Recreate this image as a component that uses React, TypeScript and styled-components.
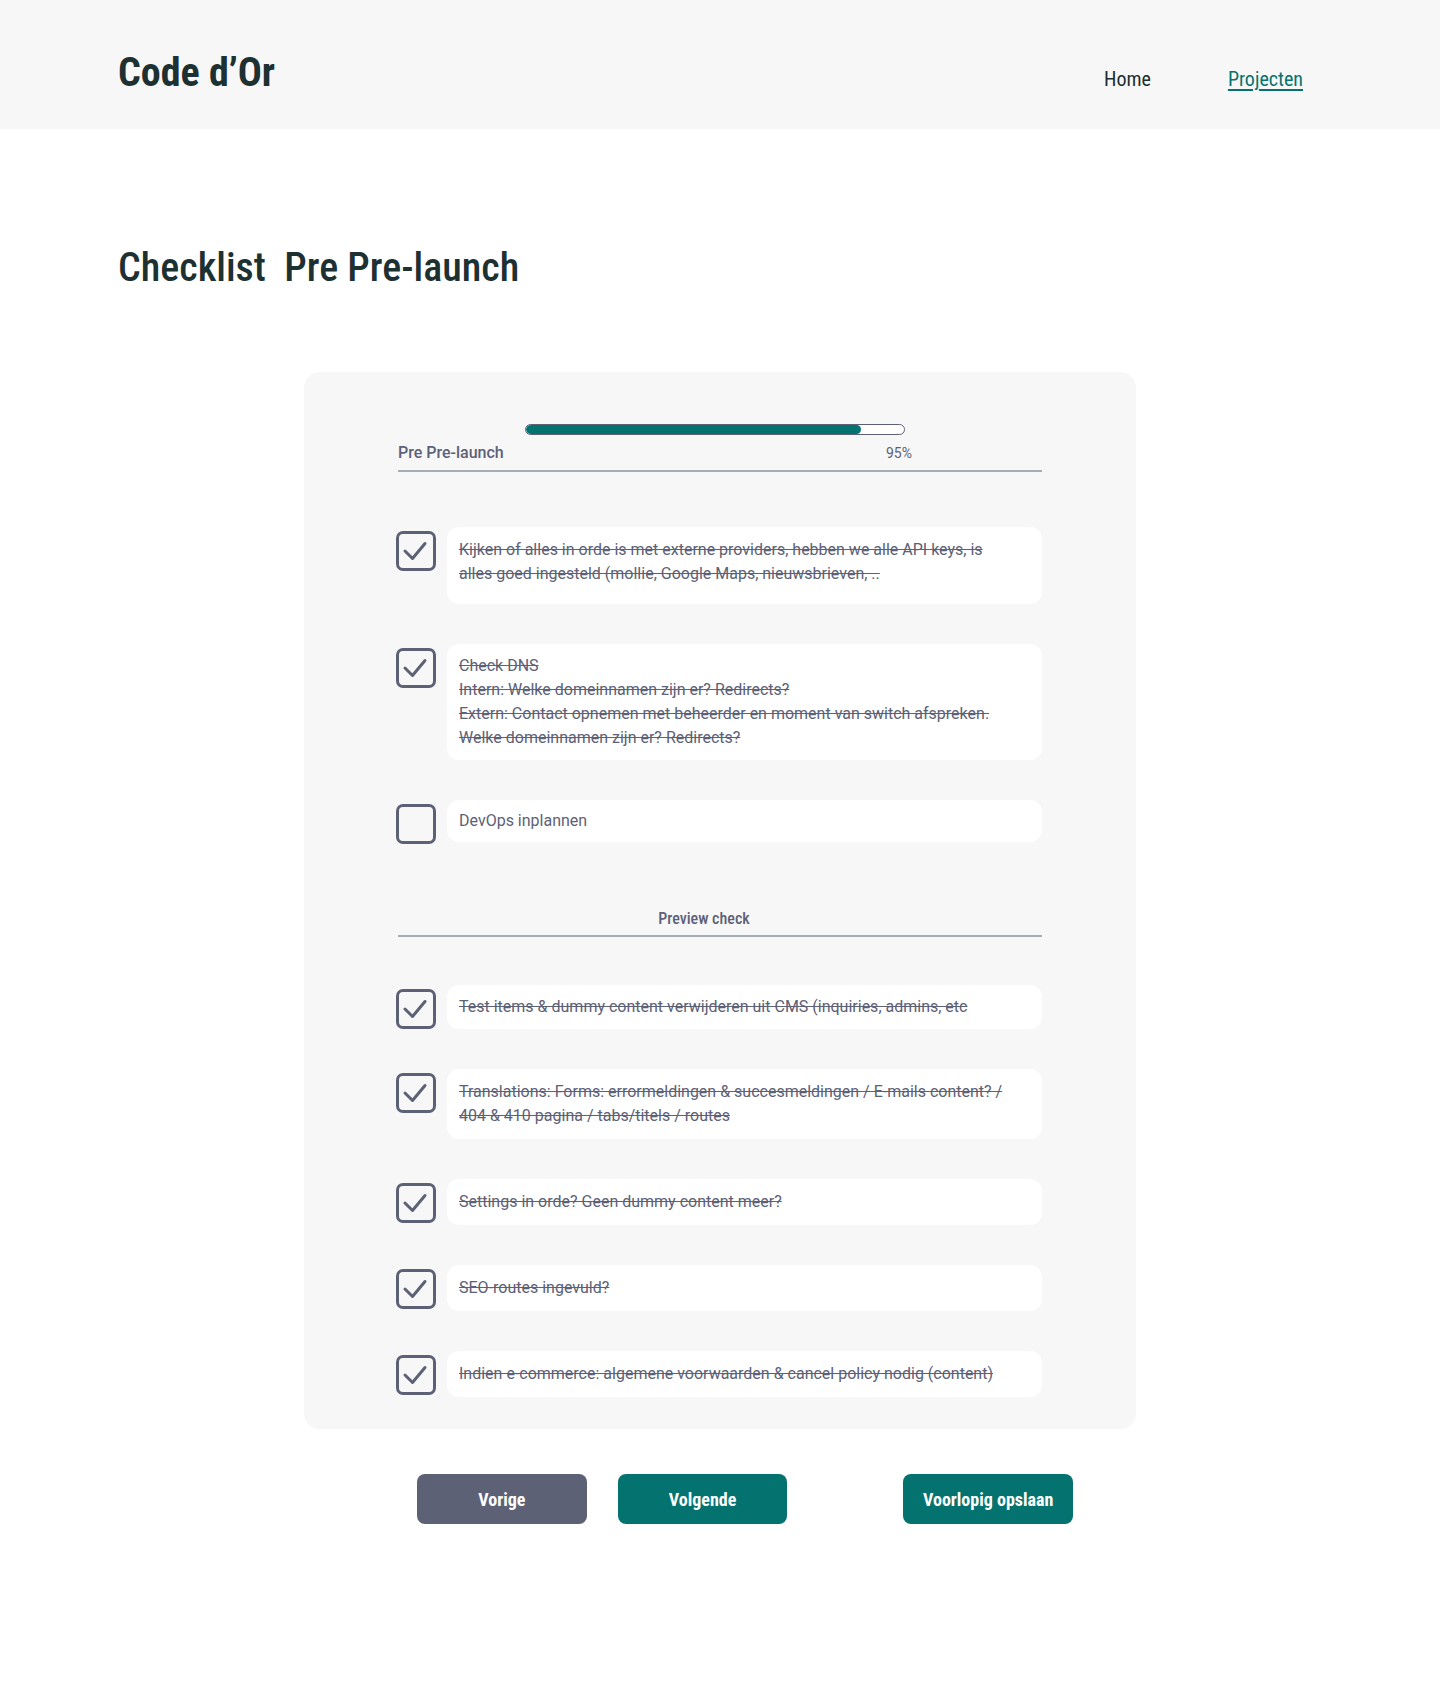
import React from "react";
import styled, { createGlobalStyle } from "styled-components";

const GlobalStyle = createGlobalStyle`
  html, body { margin: 0; padding: 0; background: #ffffff; }
  body { font-family: Roboto, "Liberation Sans", sans-serif; color: #1e3132; }
  #root { min-height: 1694px; }
  * { box-sizing: border-box; }
`;

const COND = `"Roboto Condensed", Roboto, "Liberation Sans", sans-serif`;

const Header = styled.header`
  height: 129px;
  background: #f7f7f7;
  display: flex;
  align-items: baseline;
  justify-content: space-between;
  padding: 49px 137px 0 118px;
`;

const Logo = styled.div`
  font-family: ${COND};
  font-weight: 700;
  font-size: 40px;
  line-height: 48px;
  color: #1e3132;
`;

const Nav = styled.nav`
  display: flex;
  gap: 77px;
  align-items: baseline;
`;

const NavLink = styled.a<{ $active?: boolean }>`
  font-family: ${COND};
  font-size: 20px;
  line-height: 24px;
  color: ${(p) => (p.$active ? "#05736f" : "#1e2d2f")};
  text-decoration: ${(p) => (p.$active ? "underline" : "none")};
  text-underline-offset: 3px;
  cursor: pointer;
`;

const Main = styled.main`
  padding: 115px 0 0;
`;

const Title = styled.h1`
  margin: 0 0 0 118px;
  font-family: ${COND};
  font-weight: 500;
  font-size: 40px;
  line-height: 48px;
  color: #1e3132;
  white-space: pre;
`;

const Card = styled.section`
  width: 832px;
  margin: 80px auto 0;
  background: #f7f7f7;
  border-radius: 16px;
  padding: 52px 94px 32px;
`;

const ProgressHead = styled.div`
  border-bottom: 2px solid #a9abb6;
  padding-bottom: 7px;
`;

const Track = styled.div`
  margin-left: 127px;
  width: 380px;
  height: 11px;
  border: 1px solid #5d6176;
  border-radius: 6px;
  background: #ffffff;
  overflow: hidden;
`;

const Fill = styled.div`
  height: 100%;
  background: #04736f;
  border-radius: 6px;
`;

const LabelRow = styled.div`
  display: flex;
  align-items: baseline;
  margin-top: 8px;
`;

const SectionLabel = styled.span`
  font-family: Roboto, "Liberation Sans", sans-serif;
  font-weight: 500;
  font-size: 16px;
  line-height: 19px;
  color: #5d6176;
`;

const Percent = styled.span`
  margin-left: auto;
  margin-right: 130px;
  font-size: 14px;
  line-height: 19px;
  color: #5d6176;
`;

const ItemList = styled.div<{ $top: number }>`
  display: flex;
  flex-direction: column;
  gap: 40px;
  margin-top: ${(p) => p.$top}px;
`;

const Row = styled.div`
  display: flex;
  align-items: flex-start;
  gap: 11px;
`;

const Box = styled.div`
  width: 40px;
  height: 40px;
  flex: none;
  margin: 4px 0 0 -2px;
  cursor: pointer;
  svg { display: block; }
`;

const TextBox = styled.div<{ $done?: boolean; $minH?: number; $pad?: number }>`
  flex: 1;
  background: #ffffff;
  border-radius: 12px;
  padding: ${(p) => p.$pad ?? 11}px 12px;
  min-height: ${(p) => (p.$minH ? `${p.$minH}px` : "auto")};
  font-size: 16px;
  line-height: 24px;
  color: #5d6176;
  text-decoration: ${(p) => (p.$done ? "line-through" : "none")};
`;

const Divider = styled.div`
  margin-top: 65px;
  border-bottom: 2px solid #a9abb6;
  padding: 0 32px 7px 0;
  text-align: center;
  font-family: ${COND};
  font-weight: 500;
  font-size: 16px;
  line-height: 19px;
  color: #5d6176;
`;

const ButtonRow = styled.div`
  width: 706px;
  margin: 45px auto 0;
  padding-left: 50px;
  display: flex;
  gap: 31px;
`;

const Button = styled.button<{ $variant: "grey" | "teal"; $push?: boolean }>`
  width: 170px;
  height: 50px;
  border: none;
  border-radius: 8px;
  margin-left: ${(p) => (p.$push ? "85px" : "0")};
  background: ${(p) => (p.$variant === "grey" ? "#5d6176" : "#04736f")};
  color: #ffffff;
  font-family: ${COND};
  font-weight: 700;
  font-size: 18px;
  cursor: pointer;
`;

const Check = ({ checked }: { checked: boolean }) => (
  <Box>
    <svg width="40" height="40" viewBox="0 0 40 40" fill="none">
      <rect x="1.5" y="1.5" width="37" height="37" rx="5.5" stroke="#5d6176" strokeWidth="3" fill="none" />
      {checked && (
        <polyline points="9,20 16.5,27.5 29,12.5" stroke="#5d6176" strokeWidth="3" strokeLinecap="round" strokeLinejoin="round" fill="none" />
      )}
    </svg>
  </Box>
);

type Item = { lines: string[]; done: boolean; minH?: number; pad?: number };

const first: Item[] = [
  {
    lines: [
      "Kijken of alles in orde is met externe providers, hebben we alle API keys, is",
      "alles goed ingesteld (mollie, Google Maps, nieuwsbrieven, ..",
    ],
    done: true,
    minH: 77,
  },
  {
    lines: [
      "Check DNS",
      "Intern: Welke domeinnamen zijn er? Redirects? ",
      "Extern: Contact opnemen met beheerder en moment van switch afspreken.",
      "Welke domeinnamen zijn er? Redirects?",
    ],
    done: true,
    pad: 10,
  },
  { lines: ["DevOps inplannen"], done: false, pad: 9 },
];

const second: Item[] = [
  { lines: ["Test items & dummy content verwijderen uit CMS (inquiries, admins, etc"], done: true, pad: 10 },
  {
    lines: [
      "Translations: Forms: errormeldingen & succesmeldingen / E-mails content? /",
      "404 & 410 pagina / tabs/titels / routes",
    ],
    done: true,
  },
  { lines: ["Settings in orde? Geen dummy content meer?"], done: true },
  { lines: ["SEO-routes ingevuld?"], done: true },
  { lines: ["Indien e-commerce: algemene voorwaarden & cancel policy nodig (content)"], done: true },
];

const renderItems = (items: Item[]) =>
  items.map((it, i) => (
    <Row key={i}>
      <Check checked={it.done} />
      <TextBox $done={it.done} $minH={it.minH} $pad={it.pad}>
        {it.lines.map((l, j) => (
          <React.Fragment key={j}>
            {j > 0 && <br />}
            {l}
          </React.Fragment>
        ))}
      </TextBox>
    </Row>
  ));

export default function App() {
  const progress = 88.7;
  return (
    <>
      <GlobalStyle />
      <Header>
        <Logo>Code d’Or</Logo>
        <Nav>
          <NavLink>Home</NavLink>
          <NavLink $active>Projecten</NavLink>
        </Nav>
      </Header>
      <Main>
        <Title>{"Checklist  Pre Pre-launch"}</Title>
        <Card>
          <ProgressHead>
            <Track>
              <Fill style={{ width: `${progress}%` }} />
            </Track>
            <LabelRow>
              <SectionLabel>Pre Pre-launch</SectionLabel>
              <Percent>95%</Percent>
            </LabelRow>
          </ProgressHead>
          <ItemList $top={55}>{renderItems(first)}</ItemList>
          <Divider>Preview check</Divider>
          <ItemList $top={48}>{renderItems(second)}</ItemList>
        </Card>
        <ButtonRow>
          <Button $variant="grey">Vorige</Button>
          <Button $variant="teal">Volgende</Button>
          <Button $variant="teal" $push>
            Voorlopig opslaan
          </Button>
        </ButtonRow>
      </Main>
    </>
  );
}
